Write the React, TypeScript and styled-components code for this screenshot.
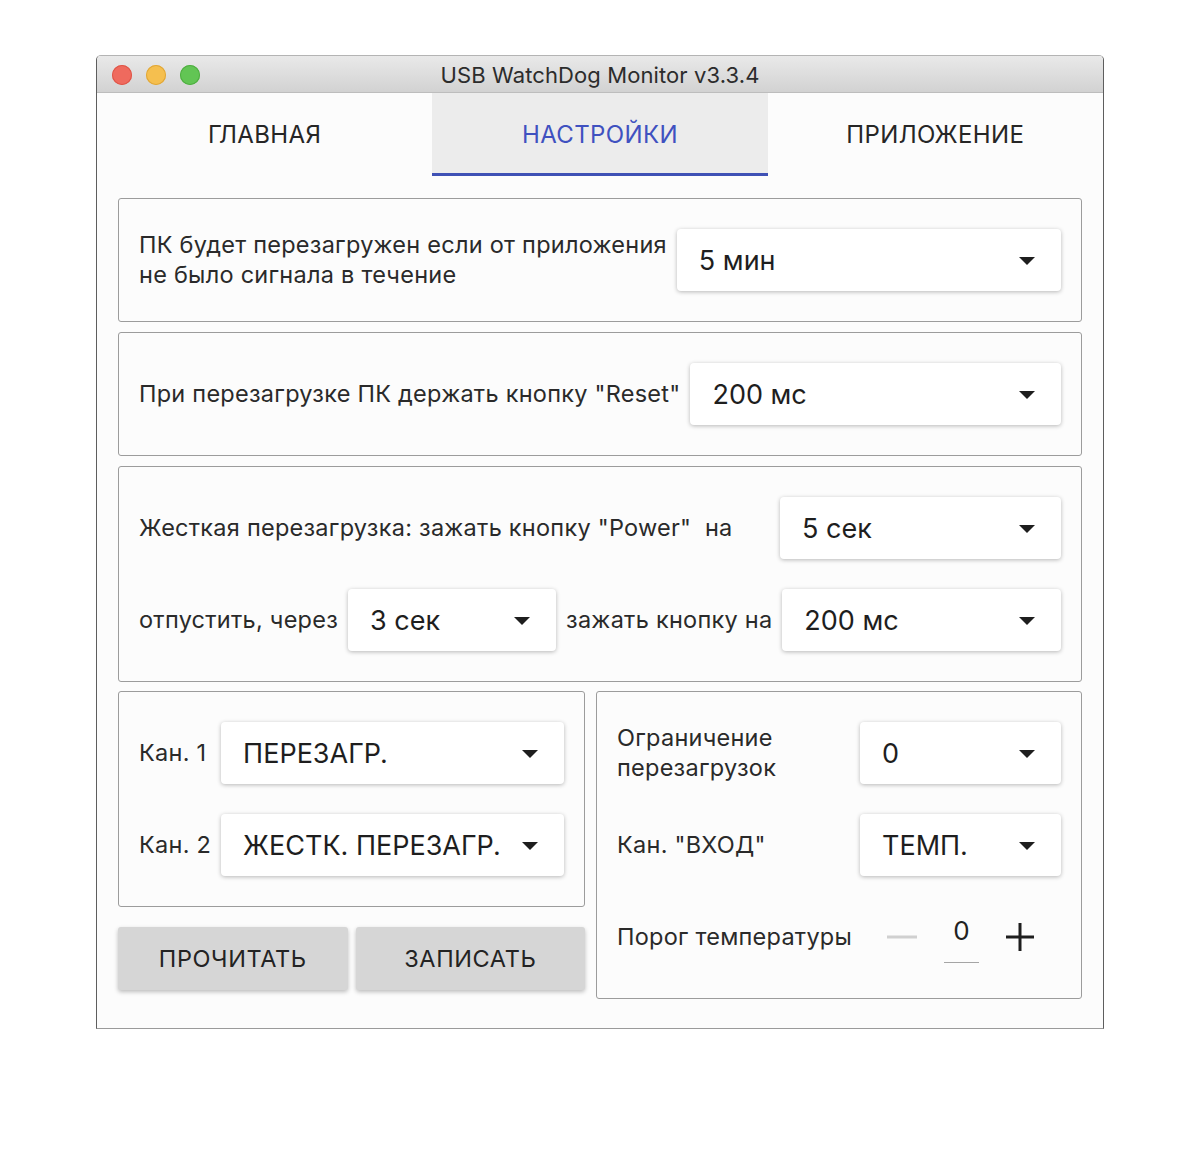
import styled, { createGlobalStyle } from "styled-components";

const GlobalStyle = createGlobalStyle`
  html, body {
    margin: 0;
    padding: 0;
    background: #ffffff;
  }
  body {
    font-family: Inter, "Noto Sans", sans-serif;
    color: #2a2a2a;
  }
`;

const Page = styled.div`
  width: 1200px;
  height: 1168px;
  padding: 55px 0 0 96px;
  box-sizing: border-box;
`;

const Window = styled.div`
  width: 1008px;
  box-sizing: border-box;
  border: 1px solid #5e5e5e;
  border-top-color: #b4b4b4;
  border-bottom-color: #9a9a9a;
  border-radius: 5px 5px 0 0;
  background: #fcfcfc;
  overflow: hidden;
`;

const TitleBar = styled.div`
  height: 36px;
  position: relative;
  display: flex;
  align-items: center;
  justify-content: center;
  background: linear-gradient(#e9e9e9, #d2d2d2);
  border-bottom: 1px solid #bdbdbd;
`;

const Lights = styled.div`
  position: absolute;
  left: 15px;
  top: 9px;
  display: flex;
  gap: 14px;
`;

const Light = styled.span<{ $color: string; $edge: string }>`
  width: 20px;
  height: 20px;
  border-radius: 50%;
  background: ${(p) => p.$color};
  box-shadow: inset 0 0 0 1px ${(p) => p.$edge};
`;

const Title = styled.div`
  font-size: 22px;
  color: #2c2c2c;
  letter-spacing: 0.1px;
  margin-top: 2px;
`;

const Tabs = styled.div`
  display: grid;
  grid-template-columns: repeat(3, 1fr);
  height: 83px;
`;

const Tab = styled.div<{ $active?: boolean }>`
  display: flex;
  align-items: center;
  justify-content: center;
  font-size: 24px;
  letter-spacing: 0.4px;
  color: ${(p) => (p.$active ? "#3f51c0" : "#262626")};
  background: ${(p) => (p.$active ? "#ececec" : "transparent")};
  border-bottom: 3px solid ${(p) => (p.$active ? "#3f51b5" : "transparent")};
  padding-top: 3px;
`;

const Content = styled.div`
  padding: 22px 21px 29px;
  display: flex;
  flex-direction: column;
  gap: 10px;
`;

const Panel = styled.div`
  border: 1px solid #9c9c9c;
  border-radius: 3px;
  padding: 30px 20px;
  display: flex;
  flex-direction: column;
  gap: 30px;
  min-width: 0;
`;

const Row = styled.div`
  display: flex;
  align-items: center;
  gap: 10px;
  min-height: 62px;
`;

const Label = styled.div<{ $grow?: boolean }>`
  font-size: 23.5px;
  line-height: 30px;
  letter-spacing: 0.25px;
  color: #2a2a2a;
  white-space: nowrap;
  flex: ${(p) => (p.$grow ? "1" : "none")};
`;

const SelectBox = styled.div<{ $width?: number }>`
  height: 62px;
  box-sizing: border-box;
  background: #ffffff;
  border-radius: 4px;
  box-shadow: 0 1px 4px rgba(0, 0, 0, 0.28);
  display: flex;
  align-items: center;
  justify-content: space-between;
  padding: 0 26px 0 22px;
  font-size: 27px;
  color: #1e1e1e;
  flex: ${(p) => (p.$width ? "none" : "1")};
  width: ${(p) => (p.$width ? `${p.$width}px` : "auto")};
  min-width: 0;
  white-space: nowrap;
`;

const Caret = styled.span`
  width: 0;
  height: 0;
  border-left: 8px solid transparent;
  border-right: 8px solid transparent;
  border-top: 8px solid #1e1e1e;
  margin-top: 2px;
`;

const BottomGrid = styled.div`
  display: grid;
  grid-template-columns: 467px minmax(0, 1fr);
  gap: 11px;
  align-items: start;
  margin-top: -1px;
`;

const LeftColumn = styled.div`
  display: flex;
  flex-direction: column;
  gap: 20px;
`;

const ChannelGrid = styled.div<{ $cols: string }>`
  display: grid;
  grid-template-columns: ${(p) => p.$cols};
  align-items: center;
  column-gap: 10px;
  row-gap: 30px;
`;

const Buttons = styled.div`
  display: grid;
  grid-template-columns: 1fr 1fr;
  gap: 8px;
`;

const Button = styled.div`
  height: 63px;
  display: flex;
  align-items: center;
  justify-content: center;
  background: #d6d6d6;
  border-radius: 3px;
  box-shadow: 0 2px 4px rgba(0, 0, 0, 0.25);
  font-size: 23.5px;
  letter-spacing: 0.6px;
  color: #232323;
`;

const Stepper = styled.div`
  height: 62px;
  display: flex;
  align-items: center;
  padding-left: 27px;
  gap: 27px;
`;

const StepValue = styled.div`
  align-self: flex-start;
  width: 35px;
  margin-top: 9px;
  text-align: center;
  font-size: 26px;
  line-height: 31px;
  color: #222;
  border-bottom: 1px solid #a5a5a5;
  padding-bottom: 16px;
`;

function Select({ value, width }: { value: string; width?: number }) {
  return (
    <SelectBox $width={width}>
      <span>{value}</span>
      <Caret />
    </SelectBox>
  );
}

export default function App() {
  return (
    <Page>
      <GlobalStyle />
      <Window>
        <TitleBar>
          <Lights>
            <Light $color="#ef6a5e" $edge="#de5648" />
            <Light $color="#f5bf4f" $edge="#dfa638" />
            <Light $color="#62c554" $edge="#4fad41" />
          </Lights>
          <Title>USB WatchDog Monitor v3.3.4</Title>
        </TitleBar>
        <Tabs>
          <Tab>ГЛАВНАЯ</Tab>
          <Tab $active>НАСТРОЙКИ</Tab>
          <Tab>ПРИЛОЖЕНИЕ</Tab>
        </Tabs>
        <Content>
          <Panel>
            <Row>
              <Label>
                ПК будет перезагружен если от приложения
                <br />
                не было сигнала в течение
              </Label>
              <Select value="5 мин" />
            </Row>
          </Panel>
          <Panel>
            <Row>
              <Label>При перезагрузке ПК держать кнопку "Reset"</Label>
              <Select value="200 мс" />
            </Row>
          </Panel>
          <Panel>
            <Row>
              <Label $grow>Жесткая перезагрузка: зажать кнопку "Power"&nbsp; на</Label>
              <Select value="5 сек" width={281} />
            </Row>
            <Row>
              <Label>отпустить, через</Label>
              <Select value="3 сек" width={208} />
              <Label>зажать кнопку на</Label>
              <Select value="200 мс" />
            </Row>
          </Panel>
          <BottomGrid>
            <LeftColumn>
              <Panel>
                <ChannelGrid $cols="auto minmax(0, 1fr)">
                  <Label>Кан. 1</Label>
                  <Select value="ПЕРЕЗАГР." />
                  <Label>Кан. 2</Label>
                  <Select value="ЖЕСТК. ПЕРЕЗАГР." />
                </ChannelGrid>
              </Panel>
              <Buttons>
                <Button>ПРОЧИТАТЬ</Button>
                <Button>ЗАПИСАТЬ</Button>
              </Buttons>
            </LeftColumn>
            <Panel>
              <ChannelGrid $cols="minmax(0, 1fr) 201px">
                <Label>
                  Ограничение
                  <br />
                  перезагрузок
                </Label>
                <Select value="0" />
                <Label>Кан. "ВХОД"</Label>
                <Select value="ТЕМП." />
                <Label>Порог температуры</Label>
                <Stepper>
                  <svg width="30" height="4" viewBox="0 0 30 4">
                    <rect x="0" y="0.5" width="30" height="3" fill="#d0d0d0" />
                  </svg>
                  <StepValue>0</StepValue>
                  <svg width="28" height="28" viewBox="0 0 28 28">
                    <rect x="0" y="12.5" width="28" height="3" fill="#1e1e1e" />
                    <rect x="12.5" y="0" width="3" height="28" fill="#1e1e1e" />
                  </svg>
                </Stepper>
              </ChannelGrid>
            </Panel>
          </BottomGrid>
        </Content>
      </Window>
    </Page>
  );
}
